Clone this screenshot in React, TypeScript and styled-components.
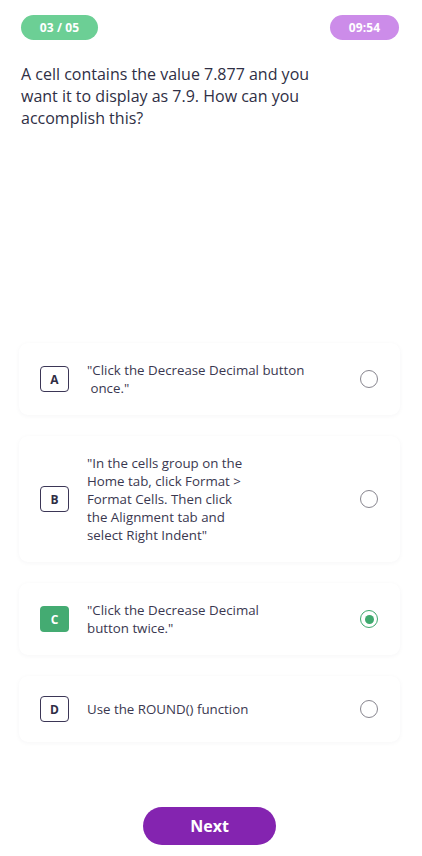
import React from "react";
import styled, { createGlobalStyle, css } from "styled-components";

const Global = createGlobalStyle`
  html, body { margin: 0; padding: 0; background: #ffffff; }
  body { font-family: "Open Sans", "Noto Sans", sans-serif; }
  * { box-sizing: border-box; }
`;

const Page = styled.div`
  width: 422px;
  height: 856px;
  display: flex;
  flex-direction: column;
  padding: 15px 22px 11px 21px;
  background: #fff;
`;

const TopBar = styled.div`
  display: flex;
  justify-content: space-between;
  align-items: center;
  padding-right: 1px;
`;

const Pill = styled.div<{ $bg: string; $w: number }>`
  width: ${(p) => p.$w}px;
  height: 25px;
  border-radius: 13px;
  background: ${(p) => p.$bg};
  color: #fff;
  font-weight: 700;
  font-size: 12px;
  display: flex;
  align-items: center;
  justify-content: center;
  letter-spacing: 0.1px;
`;

const Question = styled.p`
  margin: 23px 0 0 0;
  width: 300px;
  font-size: 16px;
  line-height: 22px;
  color: #2f2f45;
`;

const Options = styled.div`
  margin-top: 214px;
  margin-left: -2px;
  display: flex;
  flex-direction: column;
  gap: 21px;
`;

const Card = styled.div`
  display: flex;
  align-items: center;
  width: 381px;
  min-height: 66px;
  padding: 18px 22px 18px 21px;
  border-radius: 9px;
  background: #fff;
  box-shadow: 0 1px 5px rgba(40, 40, 80, 0.045);
`;

const Letter = styled.div<{ $active?: boolean }>`
  flex: none;
  width: 29px;
  height: 26px;
  border-radius: 4px;
  display: flex;
  align-items: center;
  justify-content: center;
  font-size: 12px;
  font-weight: 700;
  ${(p) =>
    p.$active
      ? css`
          background: #44ab72;
          color: #fff;
        `
      : css`
          border: 1.3px solid #3b3656;
          color: #2f2d45;
        `}
`;

const Text = styled.div`
  flex: 1;
  margin-left: 18px;
  font-size: 13.3px;
  line-height: 18px;
  color: #3a3850;
  padding-right: 30px;
  white-space: pre-wrap;
`;

const Radio = styled.div<{ $checked?: boolean }>`
  flex: none;
  width: 18px;
  height: 18px;
  border-radius: 50%;
  border: 1.8px solid ${(p) => (p.$checked ? "#3fa96e" : "#88868f")};
  display: flex;
  align-items: center;
  justify-content: center;
  &::after {
    content: "";
    display: ${(p) => (p.$checked ? "block" : "none")};
    width: 9px;
    height: 9px;
    border-radius: 50%;
    background: #3fa96e;
  }
`;

const Footer = styled.div`
  margin-top: auto;
  display: flex;
  justify-content: center;
  padding-right: 2px;
`;

const NextButton = styled.button`
  width: 133px;
  height: 38px;
  border: none;
  border-radius: 19px;
  background: #8424b0;
  color: #fff;
  font-family: "Open Sans", "Noto Sans", sans-serif;
  font-weight: 700;
  font-size: 16px;
  cursor: pointer;
`;

const options = [
  { l: "A", t: "\"Click the Decrease Decimal button\n once.\"" },
  {
    l: "B",
    t: "\"In the cells group on the\nHome tab, click Format >\nFormat Cells. Then click\nthe Alignment tab and\nselect Right Indent\"",
  },
  { l: "C", t: "\"Click the Decrease Decimal\nbutton twice.\"", active: true },
  { l: "D", t: "Use the ROUND() function" },
];

export default function App() {
  return (
    <>
      <Global />
      <Page>
        <TopBar>
          <Pill $bg="#6ccf95" $w={77}>03 / 05</Pill>
          <Pill $bg="#cc8ce9" $w={69}>09:54</Pill>
        </TopBar>
        <Question>
          A cell contains the value 7.877 and you want it to display as 7.9. How can you accomplish this?
        </Question>
        <Options>
          {options.map((o) => (
            <Card key={o.l}>
              <Letter $active={o.active}>{o.l}</Letter>
              <Text>{o.t}</Text>
              <Radio $checked={o.active} />
            </Card>
          ))}
        </Options>
        <Footer>
          <NextButton>Next</NextButton>
        </Footer>
      </Page>
    </>
  );
}
